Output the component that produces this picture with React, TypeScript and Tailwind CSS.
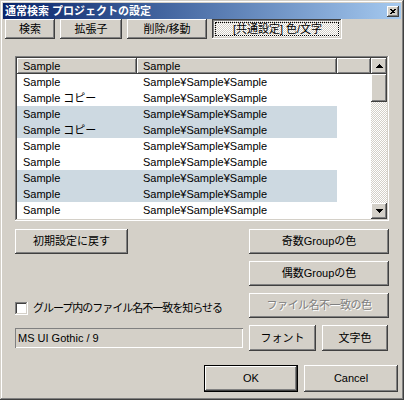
import React from 'react';

// classic 3D edges
const raised = 'shadow-[inset_-1px_-1px_#404040,inset_1px_1px_#ffffff,inset_-2px_-2px_#808080,inset_2px_2px_#d4d0c8]';
const pressed = 'shadow-[inset_-1px_-1px_#ffffff,inset_1px_1px_#404040,inset_-2px_-2px_#d4d0c8,inset_2px_2px_#808080]';
const sunken = 'shadow-[inset_-1px_-1px_#ffffff,inset_1px_1px_#808080,inset_-2px_-2px_#d4d0c8,inset_2px_2px_#404040]';
const dither = 'bg-[image:repeating-conic-gradient(#ffffff_0_25%,#d4d0c8_0_50%)] bg-[length:2px_2px]';

const rows: [string, boolean][] = [
  ['Sample', false],
  ['Sample コピー', false],
  ['Sample', true],
  ['Sample コピー', true],
  ['Sample', false],
  ['Sample', false],
  ['Sample', true],
  ['Sample', true],
  ['Sample', false],
];

const Btn: React.FC<{ className?: string; disabled?: boolean; children: React.ReactNode }> = ({ className = '', disabled, children }) => (
  <div
    className={`${raised} bg-[#d4d0c8] flex items-center justify-center shrink-0 ${
      disabled ? 'text-[#808080] [text-shadow:1px_1px_0_#ffffff]' : ''
    } ${className}`}
  >
    {children}
  </div>
);

const Arrow: React.FC<{ down?: boolean }> = ({ down }) => (
  <svg width="7" height="4" viewBox="0 0 7 4" shapeRendering="crispEdges" className={down ? 'rotate-180' : ''}>
    <rect x="3" y="0" width="1" height="1" fill="#000" />
    <rect x="2" y="1" width="3" height="1" fill="#000" />
    <rect x="1" y="2" width="5" height="1" fill="#000" />
    <rect x="0" y="3" width="7" height="1" fill="#000" />
  </svg>
);

export default function App() {
  return (
    <div
      className="w-[404px] h-[400px] bg-[#d4d0c8] p-[3px] flex flex-col text-[11px] text-black select-none font-['Liberation_Sans','Noto_Sans_CJK_JP',sans-serif] shadow-[inset_-1px_-1px_#404040,inset_1px_1px_#d4d0c8,inset_-2px_-2px_#808080,inset_2px_2px_#ffffff]"
    >
      {/* title bar */}
      <div className="h-[16px] flex items-center justify-between px-[2px] bg-linear-to-r from-[#0a246a] to-[#a6caf0]">
        <span className="text-white font-bold leading-none">通常検索 プロジェクトの設定</span>
        <div className={`${raised} bg-[#d4d0c8] w-[12px] h-[11px] flex items-center justify-center`}>
          <svg width="6" height="5" viewBox="0 0 6 5" shapeRendering="crispEdges">
            <rect x="0" y="0" width="2" height="1" fill="#000" />
            <rect x="4" y="0" width="2" height="1" fill="#000" />
            <rect x="1" y="1" width="4" height="1" fill="#000" />
            <rect x="2" y="2" width="2" height="1" fill="#000" />
            <rect x="1" y="3" width="4" height="1" fill="#000" />
            <rect x="0" y="4" width="2" height="1" fill="#000" />
          </svg>
        </div>
      </div>

      {/* page buttons */}
      <div className="flex gap-[5px] pl-[2px] h-[20px]">
        <Btn className="w-[50px] h-[20px]">検索</Btn>
        <Btn className="w-[62px] h-[20px]">拡張子</Btn>
        <Btn className="w-[80px] h-[20px]">削除/移動</Btn>
        <div className={`${pressed} ${dither} w-[130px] h-[20px] p-[3px] shrink-0`}>
          <div className="w-full h-full border border-dotted border-black flex items-center justify-center pt-px pl-px">
            [共通設定] 色/文字
          </div>
        </div>
      </div>

      {/* list view */}
      <div className={`${sunken} bg-white mt-[17px] ml-[12px] w-[374px] h-[165px] p-[2px] flex`}>
        <div className="w-[354px] flex flex-col">
          <div className="flex h-[16px] bg-[#d4d0c8]">
            <div className={`${raised} w-[120px] pl-[6px] leading-[16px]`}>Sample</div>
            <div className={`${raised} w-[200px] pl-[6px] leading-[16px]`}>Sample</div>
            <div className={`${raised} w-[34px]`} />
          </div>
          {rows.map(([name, hl], i) => (
            <div key={i} className="flex h-[16px] leading-[16px]">
              <div className={`w-[120px] pl-[6px] ${hl ? 'bg-[#cdd9e1]' : ''}`}>{name}</div>
              <div className={`w-[200px] pl-[6px] ${hl ? 'bg-[#cdd9e1]' : ''}`}>Sample¥Sample¥Sample</div>
            </div>
          ))}
        </div>
        <div className="w-[16px] flex flex-col">
          <div className={`${raised} bg-[#d4d0c8] h-[16px] flex items-center justify-center`}>
            <Arrow />
          </div>
          <div className={`${raised} bg-[#d4d0c8] h-[28px]`} />
          <div className={`${dither} flex-1`} />
          <div className={`${raised} bg-[#d4d0c8] h-[16px] flex items-center justify-center`}>
            <Arrow down />
          </div>
        </div>
      </div>

      {/* options */}
      <div className="ml-[12px] w-[374px] flex flex-col">
        <div className="mt-[8px] h-[25px] flex justify-between">
          <Btn className="w-[113px] h-[25px]">初期設定に戻す</Btn>
          <Btn className="w-[140px] h-[25px]">奇数Groupの色</Btn>
        </div>
        <div className="mt-[7px] h-[25px] flex justify-end">
          <Btn className="w-[140px] h-[25px]">偶数Groupの色</Btn>
        </div>
        <div className="mt-[7px] h-[25px] flex justify-between">
          <label className="flex items-start gap-[5px] pt-[9px]">
            <span className={`${sunken} bg-white w-[13px] h-[13px] shrink-0`} />
            <span className="leading-[13px] tracking-[-1px]">グループ内のファイル名不一致を知らせる</span>
          </label>
          <Btn disabled className="w-[140px] h-[25px] tracking-[-0.5px]">ファイル名不一致の色</Btn>
        </div>
        <div className="mt-[7px] h-[26px] flex justify-between">
          <div className="mt-[3px] w-[228px] h-[20px] pl-[3px] flex items-center shadow-[inset_1px_1px_#808080,inset_-1px_-1px_#ffffff]">
            MS UI Gothic / 9
          </div>
          <div className="flex gap-[6px] mr-px">
            <Btn className="w-[67px] h-[26px]">フォント</Btn>
            <Btn className="w-[66px] h-[26px]">文字色</Btn>
          </div>
        </div>
      </div>

      {/* dialog buttons */}
      <div className="mt-[14px] h-[27px] flex justify-end gap-[6px] pr-[3px]">
        <div className="w-[94px] h-[27px] border border-black">
          <Btn className="w-full h-full">OK</Btn>
        </div>
        <Btn className="w-[94px] h-[27px]">Cancel</Btn>
      </div>
    </div>
  );
}
